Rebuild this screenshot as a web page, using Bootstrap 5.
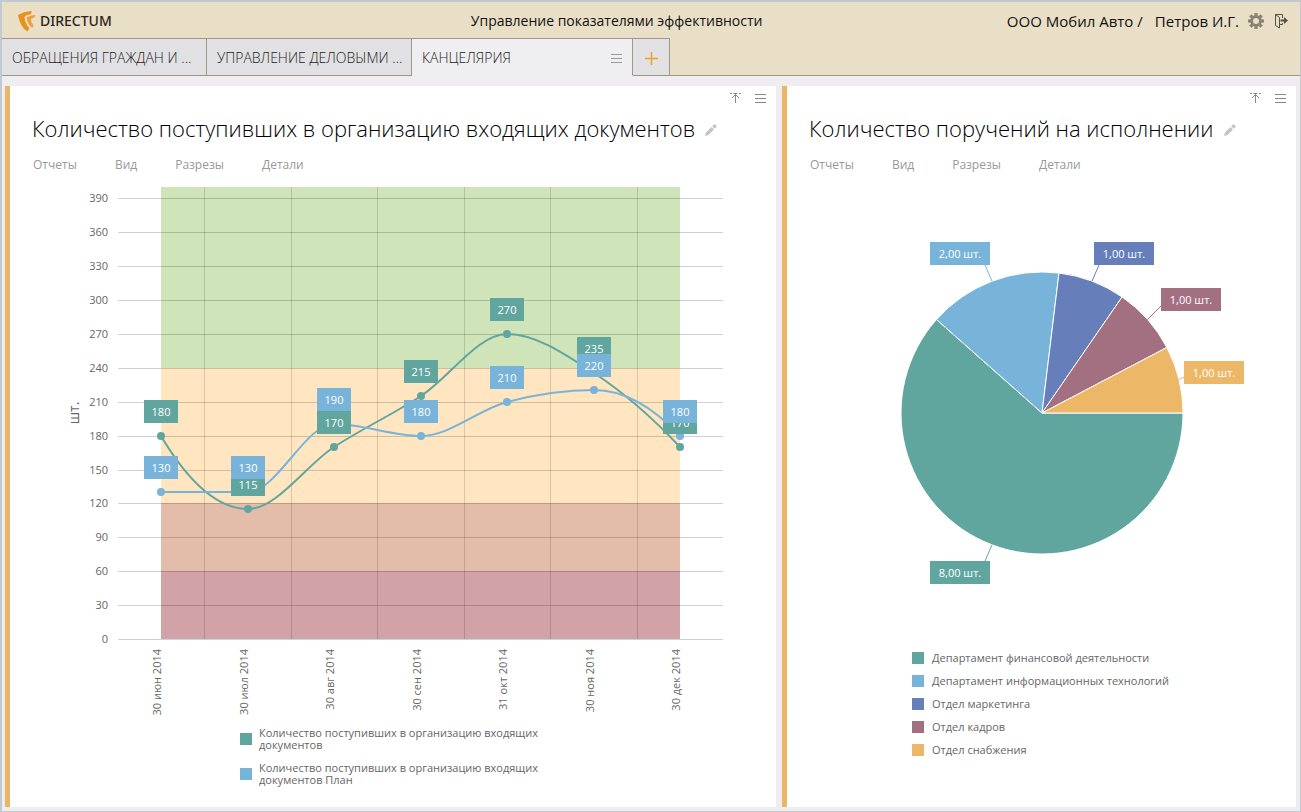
<!DOCTYPE html>
<html lang="ru">
<head>
<meta charset="utf-8">
<meta name="viewport" content="width=device-width, initial-scale=1">
<title>DIRECTUM — Управление показателями эффективности</title>
<link href="https://cdn.jsdelivr.net/npm/bootstrap@5.3.0/dist/css/bootstrap.min.css" rel="stylesheet">
<style>
  body { font-family: "Open Sans", "Noto Sans", sans-serif; font-size: 12px; line-height: 16px; color: #666; background: #efedf0; border: solid #bfcbd0; border-width: 2px 1px 1px 2px; }
  a { color: inherit; text-decoration: none; }
  .app-top { background: #e9dfc6; color: #111; }
  .app-bar { height: 36px; padding: 2px 11px 0 16px; font-size: 14px; }
  .account { font-size: 15px; }
  .brand { width: 35%; font-family: "Noto Sans", sans-serif; font-size: 14px; font-weight: 500; color: #2d2620; }
  .tab-strip { height: 38px; border-bottom: 1px solid #9c988c; }
  .tab-item { height: 38px; width: 205px; padding: 2px 10px 0; font-size: 14px; font-weight: 300; color: #222; background: #e1e0e2; border: solid #9c988c; border-width: 1px 1px 1px 0; text-align: left; white-space: nowrap; }
  .tab-item.active { width: 221px; background: #efeef0; border-bottom-color: #efeef0; }
  .tab-add { width: 37px; padding: 0; }
  .board { display: grid; grid-template-columns: 3fr 2fr; gap: 6px; padding: 10px 4px 4px 3px; }
  .widget { background: #fff; border-left: 5px solid #eab566; min-width: 0; }
  .widget-tools { height: 25px; gap: 14px; padding-right: 10px; }
  .icon-btn { padding: 0; border: 0; background: none; line-height: 0; }
  .widget h2 { font-family: "Open Sans", sans-serif; font-size: 22px; line-height: 34px; font-weight: 300; color: #000; }
  .widget-head { padding-left: 22px; gap: 10px; }
  .widget-menu { padding: 12px 0 0 23px; gap: 38px; height: 35px; color: #999; }
  .chart { display: block; width: 100%; }
  .chart text { font-size: 11px; fill: #666; }
  .chart text.tag { fill: #fff; text-anchor: middle; }
  .swatch { width: 12px; height: 12px; flex: none; }
  .legend-line { width: 306px; margin: 0 auto; padding-top: 7px; gap: 7px; font-size: 11px; line-height: 12px; }
  .legend-pie { gap: 7px; padding-left: 125px; padding-top: 10px; font-size: 11px; }
</style>
</head>
<body class="d-flex flex-column min-vh-100">
<header class="app-top">
  <div class="app-bar d-flex align-items-center">
    <a href="#" class="brand d-flex align-items-center">
      <svg width="18" height="21" viewBox="0 0 18 21" class="me-1"><path fill="#e8921b" d="M0 4 C4 2 8 .3 14 0 L12.500 3.500 C9 3.500 6.500 5 6.500 7 C7 11 9 14.500 11.300 17 L9.500 20.500 C4.500 18 1.500 11 0 4Z"/><path fill="#eea13a" d="M8.500 6.500 C11 5 14 4 17.500 4 L16.500 6.500 C14.500 6.500 13 7.500 13 8.500 C13.200 11 14 12.500 15.500 14 L14.300 17 C10.800 14.500 9 10.500 8.500 6.500Z"/></svg>
      <span>DIRECTUM</span>
    </a>
    <div class="ms-2">Управление показателями эффективности</div>
    <div class="account ms-auto d-flex align-items-center">
      <a href="#">ООО Мобил Авто /</a>
      <a href="#" class="ms-2 ps-1">Петров И.Г.</a>
      <button class="icon-btn ms-2" aria-label="Настройки"><svg width="18" height="18" viewBox="-9 -9 18 18"><g fill="#8a8272"><circle r="5.800"/><g id="teeth"><rect x="-1.600" y="-8" width="3.200" height="16"/><rect x="-8" y="-1.600" width="16" height="3.200"/></g><use href="#teeth" transform="rotate(45)"/></g><circle r="3" fill="#e9dfc6"/></svg></button>
      <button class="icon-btn ms-2" aria-label="Выход"><svg width="16" height="16" viewBox="0 0 16 16" fill="none" stroke="#555044"><path d="M2.500 12.500V1.500H9.500V5M2.500 1.500L6.500 4.500V15L2.500 12.500M7 11.500H9.500V10"/><path fill="#555044" stroke="none" d="M7.500 6.500H11V4L15 7.500L11 11V8.500H7.500Z"/></svg></button>
    </div>
  </div>
  <nav class="tab-strip d-flex" aria-label="Вкладки">
    <button class="tab-item">ОБРАЩЕНИЯ ГРАЖДАН И ...</button>
    <button class="tab-item">УПРАВЛЕНИЕ ДЕЛОВЫМИ ...</button>
    <button class="tab-item active d-flex align-items-center justify-content-between">КАНЦЕЛЯРИЯ
      <svg width="11" height="11" viewBox="0 0 11 11" stroke="#999"><path d="M0 1.500H11M0 5.500H11M0 9.500H11"/></svg></button>
    <button class="tab-item tab-add text-center" aria-label="Добавить вкладку"><svg width="13" height="13" viewBox="0 0 13 13" stroke="#eda02c" stroke-width="1.500"><path d="M6.500 0V13M0 6.500H13"/></svg></button>
  </nav>
</header>

<main class="board flex-grow-1">
  <section class="widget">
    <div class="widget-tools d-flex justify-content-end align-items-center">
      <button class="icon-btn" aria-label="Свернуть"><svg width="11" height="11" viewBox="0 0 11 11" stroke="#888" fill="none"><path d="M0 .5H2M3.500 .5H7.500M9 .5H11M5.500 1V10M2 5L5.500 1.500L9 5"/></svg></button>
      <button class="icon-btn" aria-label="Меню"><svg width="11" height="11" viewBox="0 0 11 11" stroke="#888"><path d="M0 1.500H11M0 5.500H11M0 9.500H11"/></svg></button>
    </div>
    <div class="widget-head d-flex align-items-center">
      <h2 class="m-0">Количество поступивших в организацию входящих документов</h2>
      <button class="icon-btn pt-1" aria-label="Изменить"><svg width="12" height="12" viewBox="0 0 12 12" fill="#c4c4c4"><path d="M0 12L1 8.500L6.500 3L9 5.500L3.500 11ZM7.200 2.300L9 .5Q10 0 10.800 1Q12 2 11.500 3L9.700 4.800Z"/></svg></button>
    </div>
    <nav class="widget-menu d-flex"><a href="#">Отчеты</a><a href="#">Вид</a><a href="#">Разрезы</a><a href="#">Детали</a></nav>
    <svg id="lineChart" class="chart" height="540" viewBox="0 0 766 540" preserveAspectRatio="xMinYMin meet" role="img" aria-label="График"></svg>
    <div class="legend-line d-flex align-items-center"><span class="swatch" style="background:#60a69f"></span><span>Количество поступивших в организацию входящих документов</span></div>
    <div class="legend-line d-flex align-items-center mt-1"><span class="swatch" style="background:#78b4d9"></span><span>Количество поступивших в организацию входящих документов План</span></div>
  </section>

  <section class="widget">
    <div class="widget-tools d-flex justify-content-end align-items-center">
      <button class="icon-btn" aria-label="Свернуть"><svg width="11" height="11" viewBox="0 0 11 11" stroke="#888" fill="none"><path d="M0 .5H2M3.500 .5H7.500M9 .5H11M5.500 1V10M2 5L5.500 1.500L9 5"/></svg></button>
      <button class="icon-btn" aria-label="Меню"><svg width="11" height="11" viewBox="0 0 11 11" stroke="#888"><path d="M0 1.500H11M0 5.500H11M0 9.500H11"/></svg></button>
    </div>
    <div class="widget-head d-flex align-items-center">
      <h2 class="m-0">Количество поручений на исполнении</h2>
      <button class="icon-btn pt-1" aria-label="Изменить"><svg width="12" height="12" viewBox="0 0 12 12" fill="#c4c4c4"><path d="M0 12L1 8.500L6.500 3L9 5.500L3.500 11ZM7.200 2.300L9 .5Q10 0 10.800 1Q12 2 11.500 3L9.700 4.800Z"/></svg></button>
    </div>
    <nav class="widget-menu d-flex"><a href="#">Отчеты</a><a href="#">Вид</a><a href="#">Разрезы</a><a href="#">Детали</a></nav>
    <svg id="pieChart" class="chart" height="460" viewBox="0 0 509 460" preserveAspectRatio="xMinYMin meet" role="img" aria-label="Диаграмма"></svg>
    <div id="pieLegend" class="legend-pie d-flex flex-column"></div>
  </section>
</main>

<script src="https://cdn.jsdelivr.net/npm/bootstrap@5.3.0/dist/js/bootstrap.bundle.min.js"></script>
<script>
  const GREEN = '#60a69f', BLUE = '#78b4d9';

  // Line chart
  const months = ['30 июн 2014', '30 июл 2014', '30 авг 2014', '30 сен 2014', '31 окт 2014', '30 ноя 2014', '30 дек 2014'];
  const series = [
    { color: GREEN, values: [180, 115, 170, 215, 270, 235, 170] },
    { color: BLUE, values: [130, 130, 190, 180, 210, 220, 180] }
  ];
  const bands = [[400, 240, '#cfe4b8'], [240, 120, '#ffe6c0'], [120, 60, '#e3bda9'], [60, 0, '#d1a2a7']];
  const X = i => Math.round(151 + 86.5 * i);
  const Y = v => Math.round(459 - v * 1.13);

  // Smooth path: flat at extrema, central difference elsewhere, quadratic ends
  function smooth(v) {
    const n = v.length, m = [];
    for (let i = 1; i < n - 1; i++) {
      const a = Y(v[i]) - Y(v[i - 1]), b = Y(v[i + 1]) - Y(v[i]);
      m[i] = a * b <= 0 ? 0 : (a + b) / 2;
    }
    m[0] = 2 * (Y(v[1]) - Y(v[0])) - m[1];
    m[n - 1] = 2 * (Y(v[n - 1]) - Y(v[n - 2])) - m[n - 2];
    let d = `M${X(0)} ${Y(v[0])}`;
    for (let i = 0; i < n - 1; i++) {
      const h = (X(i + 1) - X(i)) / 3;
      d += `C${X(i) + h} ${Y(v[i]) + m[i] / 3} ${X(i + 1) - h} ${Y(v[i + 1]) - m[i + 1] / 3} ${X(i + 1)} ${Y(v[i + 1])}`;
    }
    return d;
  }

  let out = '';
  bands.forEach(([hi, lo, c]) => out += `<rect x="151" y="${Y(hi)}" width="519" height="${Y(lo) - Y(hi)}" fill="${c}"/>`);
  for (let v = 0; v <= 390; v += 30) {
    out += `<path d="M108 ${Y(v) + .5}H713" stroke="#000" stroke-opacity=".18"/><text x="98" y="${Y(v) + 4}" text-anchor="end">${v}</text>`;
  }
  for (let i = 0; i < 6; i++) out += `<path d="M${Math.ceil(194 + 86.5 * i) + .5} 7V459" stroke="#000" stroke-opacity=".14"/>`;
  months.forEach((t, i) => out += `<text transform="translate(${X(i)} 469) rotate(-90)" text-anchor="end">${t}</text>`);
  out += '<text transform="translate(69 233) rotate(-90)" text-anchor="middle" style="font-size:14px">шт.</text>';
  series.forEach(s => {
    out += `<path d="${smooth(s.values)}" fill="none" stroke="${s.color}" stroke-width="2"/>`;
    s.values.forEach((v, i) => out += `<circle cx="${X(i)}" cy="${Y(v)}" r="4" fill="${s.color}"/>`);
  });
  series.forEach(s => s.values.forEach((v, i) => {
    out += `<rect x="${X(i) - 17}" y="${Y(v) - 36}" width="34" height="23" fill="${s.color}"/><text class="tag" x="${X(i)}" y="${Y(v) - 20}">${v}</text>`;
  }));
  document.getElementById('lineChart').innerHTML = out;

  // Pie chart: value, colour, name, tag box corner, leader end
  const slices = [
    [8, GREEN, 'Департамент финансовой деятельности', 143, 381, 198, 381],
    [2, BLUE, 'Департамент информационных технологий', 143, 62, 198, 85],
    [1, '#667fba', 'Отдел маркетинга', 307, 62, 312, 85],
    [1, '#a37082', 'Отдел кадров', 374, 108, 374, 126],
    [1, '#ecb867', 'Отдел снабжения', 397, 181, 397, 197]
  ];
  const cx = 255, cy = 233, r = 141, step = Math.PI * 2 / 13;
  const at = a => `${cx + r * Math.cos(a)} ${cy + r * Math.sin(a)}`;
  let angle = 0, pie = '', tags = '';
  slices.forEach(([v, c, name, bx, by, lx, ly]) => {
    const end = angle + v * step;
    pie += `<path d="M${cx} ${cy}L${at(angle)}A${r} ${r} 0 ${v > 6 ? 1 : 0} 1 ${at(end)}Z" fill="${c}" stroke="#fff" stroke-width="1"/>`;
    tags += `<path d="M${at((angle + end) / 2)}L${lx} ${ly}" stroke="${c}"/><rect x="${bx}" y="${by}" width="60" height="23" fill="${c}"/><text class="tag" x="${bx + 30}" y="${by + 16}">${v},00 шт.</text>`;
    angle = end;
  });
  document.getElementById('pieChart').innerHTML = pie + tags;
  document.getElementById('pieLegend').innerHTML = slices.map(s =>
    `<div class="d-flex align-items-center gap-2"><span class="swatch" style="background:${s[1]}"></span><span>${s[2]}</span></div>`).join('');
</script>
</body>
</html>
